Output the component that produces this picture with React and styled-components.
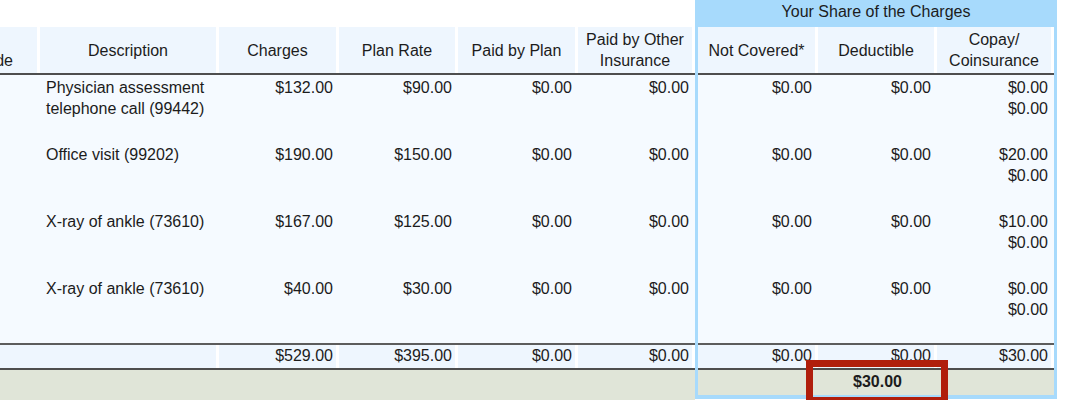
import React from "react";
import styled, { createGlobalStyle } from "styled-components";

const GlobalStyle = createGlobalStyle`
  html, body {
    margin: 0;
    padding: 0;
    background: #fff;
  }
  body {
    font-family: "Liberation Sans", Arial, sans-serif;
    font-size: 16px;
    color: #1c1c1c;
  }
`;

const MAIN_COLS = "40px 179px 120px 119px 120px 117px";
const SHARE_COLS = "120px 119px 117px";

const Statement = styled.div`
  display: flex;
  align-items: flex-start;
  width: 1080px;
`;

const MainPart = styled.div`
  width: 695px;
  display: flex;
  flex-direction: column;
`;

const ShareBox = styled.div`
  position: relative;
  width: 356px;
  display: flex;
  flex-direction: column;
  border: 3px solid #a7dafc;
  border-top: none;
  border-bottom-width: 4px;
`;

const TitleSpacer = styled.div`
  height: 27px;
`;

const ShareTitle = styled.div`
  height: 26px;
  padding-top: 1px;
  line-height: 21px;
  text-align: center;
  background: #a7dafc;
`;

const Row = styled.div`
  display: grid;
  grid-template-columns: ${(p) => p.$cols};
  height: ${(p) => p.$h}px;
  background: ${(p) => p.$bg || "transparent"};
  border-top: ${(p) => (p.$lineTop ? "2px solid #5c5c5c" : "none")};
  border-bottom: ${(p) => (p.$lineBottom ? "2px solid #4e4e4e" : "none")};
  line-height: 21px;
`;

const Cell = styled.div`
  display: flex;
  flex-direction: column;
  align-items: ${(p) => (p.$align === "left" ? "flex-start" : p.$align === "center" ? "center" : "flex-end")};
  text-align: ${(p) => p.$align || "right"};
  padding: ${(p) => p.$pt || 0}px 3px 0 6px;
  border-right: 3px solid ${(p) => (p.$gap ? "#fff" : "transparent")};
  background: ${(p) => p.$bg || "transparent"};
  background-clip: padding-box;
  grid-column: ${(p) => (p.$span ? `span ${p.$span}` : "auto")};
  font-weight: ${(p) => (p.$bold ? 700 : 400)};
  overflow: hidden;
  white-space: nowrap;
`;

const HeadCell = styled.div`
  display: flex;
  align-items: center;
  justify-content: center;
  text-align: center;
  padding: 0 2px;
  border-right: 3px solid #fff;
  background: #eef6fe;
  background-clip: padding-box;
  overflow: hidden;
`;

const CodeHead = styled(HeadCell)`
  justify-content: flex-end;
  align-items: flex-end;
  padding: 0 24px 2px 0;
  white-space: nowrap;
`;

const Highlight = styled.div`
  position: absolute;
  left: 108px;
  top: 360px;
  width: 142px;
  height: 44px;
  box-sizing: border-box;
  border: 7px solid #b01e0c;
`;

const HEAD_BG = "#eef6fe";
const BODY_BG = "#f5faff";
const FOOT_BG = "#e0e5d8";

const lines = [
  {
    desc: ["Physician assessment", "telephone call (99442)"],
    charges: "$132.00",
    rate: "$90.00",
    copay: ["$0.00", "$0.00"],
  },
  { desc: ["Office visit (99202)"], charges: "$190.00", rate: "$150.00", copay: ["$20.00", "$0.00"] },
  { desc: ["X-ray of ankle (73610)"], charges: "$167.00", rate: "$125.00", copay: ["$10.00", "$0.00"] },
  { desc: ["X-ray of ankle (73610)"], charges: "$40.00", rate: "$30.00", copay: ["$0.00", "$0.00"] },
];

function Lines({ items }) {
  return items.map((t, i) => <div key={i}>{t}</div>);
}

export default function App() {
  return (
    <>
      <GlobalStyle />
      <Statement>
        <MainPart>
          <TitleSpacer />
          <Row $cols={MAIN_COLS} $h={46} $lineBottom>
            <CodeHead>Code</CodeHead>
            <HeadCell>Description</HeadCell>
            <HeadCell>Charges</HeadCell>
            <HeadCell>Plan Rate</HeadCell>
            <HeadCell>Paid by Plan</HeadCell>
            <HeadCell>
              Paid by Other
              <br />
              Insurance
            </HeadCell>
          </Row>
          {lines.map((l, i) => (
            <Row key={i} $cols={MAIN_COLS} $h={67} $bg={BODY_BG}>
              <Cell />
              <Cell $align="left" $pt={2}>
                <Lines items={l.desc} />
              </Cell>
              <Cell $pt={2}>{l.charges}</Cell>
              <Cell $pt={2}>{l.rate}</Cell>
              <Cell $pt={2}>$0.00</Cell>
              <Cell $pt={2}>$0.00</Cell>
            </Row>
          ))}
          <Row $cols={MAIN_COLS} $h={23} $lineTop $lineBottom>
            <Cell $span={2} $gap $bg={HEAD_BG} />
            <Cell $gap $bg={HEAD_BG}>$529.00</Cell>
            <Cell $gap $bg={HEAD_BG}>$395.00</Cell>
            <Cell $gap $bg={HEAD_BG}>$0.00</Cell>
            <Cell $gap $bg={HEAD_BG}>$0.00</Cell>
          </Row>
          <Row $cols={MAIN_COLS} $h={30} $bg={FOOT_BG} />
        </MainPart>

        <ShareBox>
          <ShareTitle>Your Share of the Charges</ShareTitle>
          <Row $cols={SHARE_COLS} $h={46} $lineBottom>
            <HeadCell>Not Covered*</HeadCell>
            <HeadCell>Deductible</HeadCell>
            <HeadCell>
              Copay/
              <br />
              Coinsurance
            </HeadCell>
          </Row>
          {lines.map((l, i) => (
            <Row key={i} $cols={SHARE_COLS} $h={67} $bg={BODY_BG}>
              <Cell $pt={2}>$0.00</Cell>
              <Cell $pt={2}>$0.00</Cell>
              <Cell $pt={2}>
                <Lines items={l.copay} />
              </Cell>
            </Row>
          ))}
          <Row $cols={SHARE_COLS} $h={23} $lineTop $lineBottom>
            <Cell $gap $bg={HEAD_BG}>$0.00</Cell>
            <Cell $gap $bg={HEAD_BG}>$0.00</Cell>
            <Cell $bg={HEAD_BG}>$30.00</Cell>
          </Row>
          <Row $cols={SHARE_COLS} $h={25} $bg={FOOT_BG}>
            <Cell />
            <Cell $align="center" $pt={1} $bold>
              $30.00
            </Cell>
            <Cell />
          </Row>
          <Highlight />
        </ShareBox>
      </Statement>
    </>
  );
}
